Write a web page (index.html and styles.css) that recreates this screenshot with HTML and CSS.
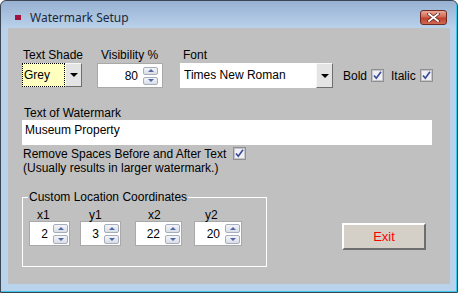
FILE: index.html
```html
<!DOCTYPE html>
<html lang="en">
<head>
    <meta charset="UTF-8">
    <meta name="viewport" content="width=device-width, initial-scale=1.0">
    <title>Watermark Setup</title>
    <link rel="stylesheet" href="styles.css">
</head>
<body>

    <div class="window">
        <div class="titlebar">
            <span class="app-icon"></span>
            <span class="title">Watermark Setup</span>
            <button class="close-btn" type="button">
                <svg width="13" height="9" viewBox="0 0 13 9">
                    <path d="M2 1 L11 8 M11 1 L2 8" stroke="#5a2018" stroke-width="3.2" stroke-linecap="square"/>
                    <path d="M2 1 L11 8 M11 1 L2 8" stroke="#fff" stroke-width="1.8" stroke-linecap="square"/>
                </svg>
            </button>
        </div>

        <div class="client">
            <div class="top-row">
                <div class="field shade">
                    <label>Text Shade</label>
                    <div class="combo">
                        <span class="combo-text focused">Grey</span>
                        <span class="combo-btn"><span class="arrow"></span></span>
                    </div>
                </div>

                <div class="field visibility">
                    <label>Visibility %</label>
                    <div class="spin">
                        <span class="spin-value">80</span>
                        <span class="spin-btns"><span class="spin-up"></span><span class="spin-down"></span></span>
                    </div>
                </div>

                <div class="field font">
                    <label>Font</label>
                    <div class="combo">
                        <span class="combo-text">Times New Roman</span>
                        <span class="combo-btn"><span class="arrow"></span></span>
                    </div>
                </div>

                <div class="check bold-check">
                    Bold
                    <span class="checkbox"><svg width="13" height="13" viewBox="0 0 13 13"><rect x="0.5" y="0.5" width="12" height="12" fill="#e4e4e8" stroke="#8e8f8f"/><rect x="1.5" y="1.5" width="10" height="10" fill="#f0f0f4" stroke="#c4c6cc"/><path d="M3 6.5 L5.3 9.2 L10 2.8" fill="none" stroke="#3a4c98" stroke-width="1.7"/></svg></span>
                </div>
                <div class="check">
                    Italic
                    <span class="checkbox"><svg width="13" height="13" viewBox="0 0 13 13"><rect x="0.5" y="0.5" width="12" height="12" fill="#e4e4e8" stroke="#8e8f8f"/><rect x="1.5" y="1.5" width="10" height="10" fill="#f0f0f4" stroke="#c4c6cc"/><path d="M3 6.5 L5.3 9.2 L10 2.8" fill="none" stroke="#3a4c98" stroke-width="1.7"/></svg></span>
                </div>
            </div>

            <div class="field watermark">
                <label>Text of Watermark</label>
                <div class="textbox">Museum Property</div>
            </div>

            <div class="trim-option">
                Remove Spaces Before and After Text<span class="checkbox"><svg width="13" height="13" viewBox="0 0 13 13"><rect x="0.5" y="0.5" width="12" height="12" fill="#e4e4e8" stroke="#8e8f8f"/><rect x="1.5" y="1.5" width="10" height="10" fill="#f0f0f4" stroke="#c4c6cc"/><path d="M3 6.5 L5.3 9.2 L10 2.8" fill="none" stroke="#3a4c98" stroke-width="1.7"/></svg></span><br>
                (Usually results in larger watermark.)
            </div>

            <div class="bottom-row">
                <fieldset class="coords">
                    <legend>Custom Location Coordinates</legend>
                    <div class="coord-list">
                        <div class="coord c-x1">
                            <label>x1</label>
                            <div class="spin small">
                                <span class="spin-value">2</span>
                                <span class="spin-btns"><span class="spin-up"></span><span class="spin-down"></span></span>
                            </div>
                        </div>
                        <div class="coord c-y1">
                            <label>y1</label>
                            <div class="spin small">
                                <span class="spin-value">3</span>
                                <span class="spin-btns"><span class="spin-up"></span><span class="spin-down"></span></span>
                            </div>
                        </div>
                        <div class="coord c-x2">
                            <label>x2</label>
                            <div class="spin small">
                                <span class="spin-value">22</span>
                                <span class="spin-btns"><span class="spin-up"></span><span class="spin-down"></span></span>
                            </div>
                        </div>
                        <div class="coord c-y2">
                            <label>y2</label>
                            <div class="spin small">
                                <span class="spin-value">20</span>
                                <span class="spin-btns"><span class="spin-up"></span><span class="spin-down"></span></span>
                            </div>
                        </div>
                    </div>
                </fieldset>

                <button class="exit-btn" type="button">Exit</button>
            </div>
        </div>
    </div>

</body>
</html>
```

FILE: styles.css
```css
body {
    margin: 0;
    background-color: #fff;
    font-family: "Liberation Sans", Arial, sans-serif;
    font-size: 12px;
    color: #000;
}

.window {
    width: 458px;
    height: 293px;
    box-sizing: border-box;
    border: 1px solid #3a4452;
    border-radius: 6px 6px 0 0;
    box-shadow: inset -1px -1px 0 #3cc8e8;
    padding: 0 7px 8px 7px;
    background: linear-gradient(#98b1d2 0, #b9d1ea 27px, #b9d3ec 100%);
}

/* title bar */
.titlebar {
    height: 27px;
    box-sizing: border-box;
    padding-top: 5px;
    display: flex;
    align-items: center;
}

.app-icon {
    width: 6px;
    height: 5px;
    margin-left: 7px;
    margin-right: 9px;
    background-color: #a3103c;
}

.title {
    font-family: "Noto Sans", sans-serif;
    font-size: 12px;
    color: #1c2838;
}

.close-btn {
    margin-left: auto;
    margin-right: 3px;
    width: 27px;
    height: 15px;
    padding: 0;
    border: 1px solid #6c2a22;
    border-radius: 3px;
    background: linear-gradient(#e9a797 0, #d36a55 45%, #c0402a 55%, #cf6a52 100%);
    display: flex;
    align-items: center;
    justify-content: center;
}

.close-btn svg {
    display: block;
}

/* client area */
.client {
    height: 256px;
    box-sizing: border-box;
    background-color: #c0c0c0;
    padding: 20px 0 0 14px;
}

.field label {
    display: block;
    line-height: 14px;
    margin-bottom: 1px;
    white-space: nowrap;
}

.top-row {
    display: flex;
    align-items: flex-end;
}

.shade {
    width: 60px;
    margin-right: 15px;
}

.shade label {
    padding-left: 1px;
}

.visibility {
    width: 66px;
    margin-right: 17px;
}

.visibility label {
    padding-left: 4px;
}

.font {
    width: 153px;
    margin-right: 10px;
}

.font label {
    padding-left: 3px;
}

.combo {
    display: flex;
    height: 25px;
}

.combo-text {
    flex: 1;
    box-sizing: border-box;
    background-color: #fff;
    line-height: 23px;
    padding-left: 3px;
    border: 1px solid transparent;
    white-space: nowrap;
    overflow: hidden;
}

.combo-text.focused {
    background-color: #ffffc0;
    border: 1px dotted #000;
    padding-left: 1px;
    height: 24px;
}

.combo-btn {
    width: 17px;
    box-sizing: border-box;
    background-color: #e4e4e4;
    border-top: 1px solid #f8f8f8;
    border-left: 1px solid #f8f8f8;
    border-right: 1px solid #6e6e6e;
    border-bottom: 1px solid #6e6e6e;
    display: flex;
    align-items: center;
    justify-content: center;
}

.shade .combo-btn {
    height: 24px;
}

.arrow {
    width: 0;
    height: 0;
    border-left: 4px solid transparent;
    border-right: 4px solid transparent;
    border-top: 4px solid #000;
}

/* spinners */
.spin {
    display: flex;
    align-items: center;
    height: 25px;
    box-sizing: border-box;
    background-color: #fff;
    border: 1px solid #a9a9a9;
}

.spin-value {
    flex: 1;
    text-align: right;
    padding-right: 5px;
}

.spin-btns {
    width: 15px;
    height: 18px;
    margin-right: 4px;
    display: flex;
    flex-direction: column;
    justify-content: space-between;
}

.spin.small .spin-btns {
    height: 20px;
    margin-right: 1px;
}

.spin-up,
.spin-down {
    height: 8px;
    box-sizing: border-box;
    border: 1px solid #a6aebc;
    border-radius: 2px;
    background: linear-gradient(#f4f5f9, #d9dde6);
    display: flex;
    align-items: center;
    justify-content: center;
}

.spin.small .spin-up,
.spin.small .spin-down {
    height: 9px;
}

.spin-up::after,
.spin-down::after {
    content: "";
    border-left: 3px solid transparent;
    border-right: 3px solid transparent;
}

.spin-up::after {
    border-bottom: 3px solid #5068a4;
}

.spin-down::after {
    border-top: 3px solid #5068a4;
}

/* checkboxes */
.check {
    height: 25px;
    display: flex;
    align-items: center;
}

.bold-check {
    margin-right: 7px;
}

.checkbox {
    display: inline-block;
    width: 13px;
    height: 13px;
    margin-left: 5px;
}

.check .checkbox {
    margin-left: 4px;
}

.checkbox svg {
    display: block;
}

/* watermark text */
.watermark {
    margin-top: 18px;
}

.watermark label {
    margin-bottom: 0;
    padding-left: 2px;
}

.textbox {
    width: 410px;
    height: 25px;
    box-sizing: border-box;
    background-color: #fff;
    line-height: 21px;
    padding-left: 3px;
}

.trim-option {
    margin-top: 2px;
    line-height: 14px;
    padding-left: 1px;
}

.trim-option .checkbox {
    vertical-align: top;
    margin-left: 7px;
}

/* coordinates group */
.bottom-row {
    display: flex;
    align-items: flex-start;
    margin-top: 15px;
}

.coords {
    width: 245px;
    box-sizing: border-box;
    margin: 0;
    border: 1px solid #fff;
    padding: 6px 0 20px 6px;
}

.coords legend {
    padding: 0 1px;
    margin-left: -1px;
    line-height: 14px;
}

.coord-list {
    display: flex;
}

.coord label {
    display: block;
    line-height: 10px;
    margin-bottom: 1px;
}

.c-x1 {
    width: 41px;
    margin-right: 10px;
}

.c-x1 label {
    padding-left: 8px;
}

.c-y1 {
    width: 41px;
    margin-right: 14px;
}

.c-y1 label {
    padding-left: 9px;
}

.c-x2 {
    width: 47px;
    margin-right: 12px;
}

.c-x2 label {
    padding-left: 13px;
}

.c-y2 {
    width: 48px;
}

.c-y2 label {
    padding-left: 11px;
}

.exit-btn {
    margin-left: 75px;
    margin-top: 33px;
    width: 84px;
    height: 27px;
    padding: 0;
    background-color: #d4d0c8;
    border-top: 2px solid #fff;
    border-left: 2px solid #fff;
    border-right: 2px solid #6e6e6e;
    border-bottom: 2px solid #6e6e6e;
    color: #ff0000;
    font-family: "Liberation Sans", Arial, sans-serif;
    font-size: 13px;
}
```
